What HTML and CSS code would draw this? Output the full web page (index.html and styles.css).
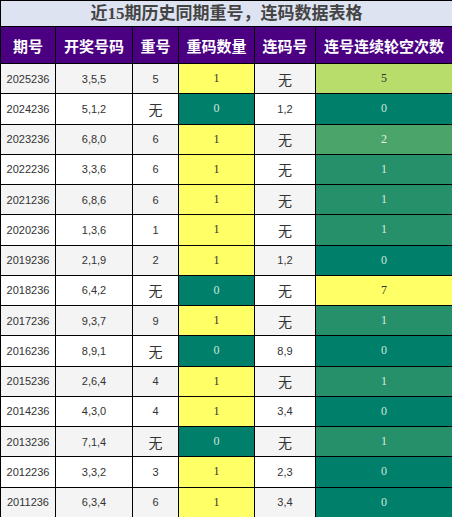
FILE: index.html
```html
<!DOCTYPE html>
<html lang="zh">
<head>
<meta charset="utf-8">
<title>近15期历史同期重号，连码数据表格</title>
<link rel="stylesheet" href="styles.css">
</head>
<body>
<table class="data">
  <colgroup>
    <col class="c1"><col class="c2"><col class="c3"><col class="c4"><col class="c5"><col class="c6">
  </colgroup>
  <thead>
    <tr class="title-row"><th colspan="6" class="title">近15期历史同期重号，连码数据表格</th></tr>
    <tr class="head-row">
      <th>期号</th><th>开奖号码</th><th>重号</th><th>重码数量</th><th>连码号</th><th>连号连续轮空次数</th>
    </tr>
  </thead>
  <tbody>
    <tr class="odd"><td>2025236</td><td>3,5,5</td><td>5</td><td class="num yes">1</td><td class="cjk">无</td><td class="num g5">5</td></tr>
    <tr class="even"><td>2024236</td><td>5,1,2</td><td class="cjk">无</td><td class="num no">0</td><td>1,2</td><td class="num g0">0</td></tr>
    <tr class="odd"><td>2023236</td><td>6,8,0</td><td>6</td><td class="num yes">1</td><td class="cjk">无</td><td class="num g2">2</td></tr>
    <tr class="even"><td>2022236</td><td>3,3,6</td><td>6</td><td class="num yes">1</td><td class="cjk">无</td><td class="num g1">1</td></tr>
    <tr class="odd"><td>2021236</td><td>6,8,6</td><td>6</td><td class="num yes">1</td><td class="cjk">无</td><td class="num g1">1</td></tr>
    <tr class="even"><td>2020236</td><td>1,3,6</td><td>1</td><td class="num yes">1</td><td class="cjk">无</td><td class="num g1">1</td></tr>
    <tr class="odd"><td>2019236</td><td>2,1,9</td><td>2</td><td class="num yes">1</td><td>1,2</td><td class="num g0">0</td></tr>
    <tr class="even"><td>2018236</td><td>6,4,2</td><td class="cjk">无</td><td class="num no">0</td><td class="cjk">无</td><td class="num g7">7</td></tr>
    <tr class="odd"><td>2017236</td><td>9,3,7</td><td>9</td><td class="num yes">1</td><td class="cjk">无</td><td class="num g1">1</td></tr>
    <tr class="even"><td>2016236</td><td>8,9,1</td><td class="cjk">无</td><td class="num no">0</td><td>8,9</td><td class="num g0">0</td></tr>
    <tr class="odd"><td>2015236</td><td>2,6,4</td><td>4</td><td class="num yes">1</td><td class="cjk">无</td><td class="num g1">1</td></tr>
    <tr class="even"><td>2014236</td><td>4,3,0</td><td>4</td><td class="num yes">1</td><td>3,4</td><td class="num g0">0</td></tr>
    <tr class="odd"><td>2013236</td><td>7,1,4</td><td class="cjk">无</td><td class="num no">0</td><td class="cjk">无</td><td class="num g1">1</td></tr>
    <tr class="even"><td>2012236</td><td>3,3,2</td><td>3</td><td class="num yes">1</td><td>2,3</td><td class="num g0">0</td></tr>
    <tr class="odd"><td>2011236</td><td>6,3,4</td><td>6</td><td class="num yes">1</td><td>3,4</td><td class="num g0">0</td></tr>
  </tbody>
</table>
</body>
</html>
```

FILE: styles.css
```css
html, body {
  margin: 0;
  padding: 0;
  background: #ffffff;
}

.data {
  border-collapse: collapse;
  table-layout: fixed;
  width: 452px;
  font-family: "Liberation Sans", "Noto Sans CJK SC", sans-serif;
  font-size: 11px;
  color: #333333;
}

.c1 { width: 55px; }
.c2 { width: 77px; }
.c3 { width: 46px; }
.c4 { width: 76px; }
.c5 { width: 61px; }
.c6 { width: 137px; }

.data th,
.data td {
  border: 1px solid #000000;
  padding: 0;
  text-align: center;
  vertical-align: middle;
}

.title-row { height: 26px; }

.title {
  background: #dde3f0;
  color: #444444;
  font-family: "Liberation Serif", "Noto Sans CJK SC", serif;
  font-size: 17px;
  font-weight: bold;
  line-height: 24px;
}

.head-row { height: 37px; }

.head-row th {
  background: #4b0082;
  color: #ffffff;
  font-family: "Noto Sans CJK SC", sans-serif;
  font-size: 15px;
  font-weight: bold;
}

tbody tr { height: 30.25px; }

.odd td { background: #f4f4f4; }
.even td { background: #ffffff; }

.data td.cjk {
  font-family: "Noto Sans CJK SC", sans-serif;
  font-size: 14px;
}

.data td.num {
  font-family: "Liberation Serif", serif;
  font-size: 12px;
}

.data td.yes { background: #ffff66; color: #333333; }
.data td.no { background: #00806a; color: #cfe6dc; }
.data td.g0 { background: #00806a; color: #cfe6dc; }
.data td.g1 { background: #26906a; color: #d6ecdd; }
.data td.g2 { background: #4ba56a; color: #e6f2e0; }
.data td.g5 { background: #b8dd6a; color: #333333; }
.data td.g7 { background: #ffff66; color: #333333; }
```
